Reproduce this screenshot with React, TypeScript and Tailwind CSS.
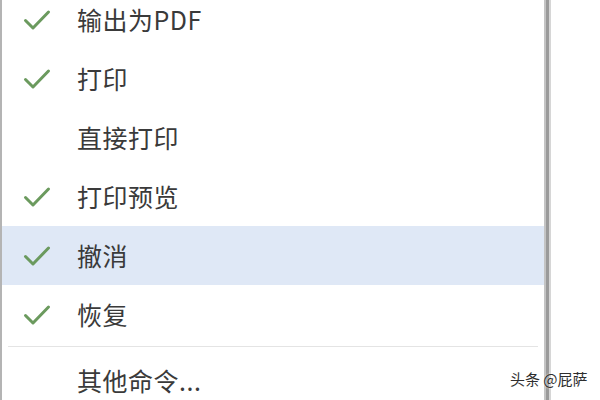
import React from "react";

const Check = () => (
  <svg width="28" height="22" viewBox="0 0 28 22" fill="none">
    <path d="M2.5 11.5 L10 19 L25.5 3" stroke="#6b9a5e" strokeWidth="3" strokeLinecap="round" strokeLinejoin="round" />
  </svg>
);

type Item = { label: string; checked: boolean; active?: boolean };

const items: Item[] = [
  { label: "输出为PDF", checked: true },
  { label: "打印", checked: true },
  { label: "直接打印", checked: false },
  { label: "打印预览", checked: true },
  { label: "撤消", checked: true, active: true },
  { label: "恢复", checked: true },
];

function Row({ item }: { item: Item }) {
  return (
    <div className={`flex h-[59px] shrink-0 items-center ${item.active ? "bg-[#dfe8f6]" : ""}`}>
      <div className="flex w-[75px] shrink-0 justify-start pl-[21px]">{item.checked ? <Check /> : null}</div>
      <span className="text-[25px] leading-none tracking-[0.5px] text-[#3a3a3a]">{item.label}</span>
    </div>
  );
}

export default function App() {
  return (
    <div
      className="relative flex h-[400px] w-[600px] overflow-hidden bg-white"
      style={{ fontFamily: '"Noto Sans CJK SC", "Noto Sans", sans-serif' }}
    >
      <div className="w-[2px] shrink-0 bg-[#b4b4b4]" />
      <div className="flex w-[542px] shrink-0 flex-col bg-white">
        <div className="-mt-[10px] flex flex-col">
          {items.map((it) => (
            <Row key={it.label} item={it} />
          ))}
          <div className="pb-[4px] pl-[6px] pr-[6px] pt-[2px]">
            <div className="h-[1px] bg-[#e4e4e4]" />
          </div>
          <div className="flex h-[59px] shrink-0 items-center">
            <div className="w-[75px] shrink-0" />
            <span className="text-[25px] leading-none tracking-[0.5px] text-[#3a3a3a]">其他命令...</span>
          </div>
        </div>
      </div>
      <div className="w-[2px] shrink-0 bg-[#c4c4c4]" />
      <div className="w-[3px] shrink-0 bg-[#9a9a9a]" />
      <div className="w-[2px] shrink-0 bg-[#d6d6d6]" />
      <div className="flex-1 bg-white" />
      <div
        className="absolute left-[510px] top-[371px] text-[15px] leading-none text-[#2e2e2e]"
        style={{ textShadow: "0 0 2px #fff" }}
      >
        头条 @屁萨
      </div>
    </div>
  );
}
